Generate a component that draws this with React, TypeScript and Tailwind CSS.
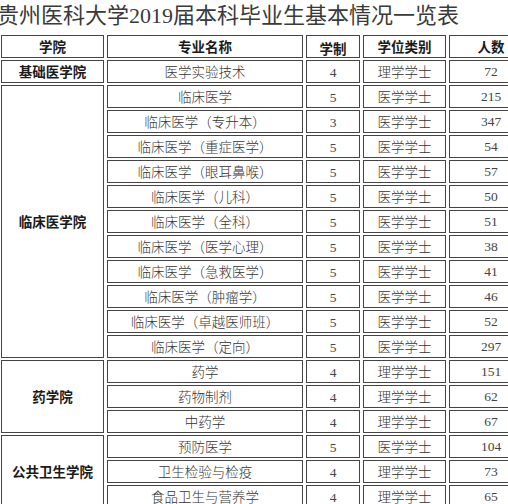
import { Fragment } from 'react'

type Row = { major: string; years: string; degree: string; count: string }
type Group = { college: string; rows: Row[] }

const groups: Group[] = [
  { college: '基础医学院', rows: [{ major: '医学实验技术', years: '4', degree: '理学学士', count: '72' }] },
  {
    college: '临床医学院',
    rows: [
      { major: '临床医学', years: '5', degree: '医学学士', count: '215' },
      { major: '临床医学（专升本）', years: '3', degree: '医学学士', count: '347' },
      { major: '临床医学（重症医学）', years: '5', degree: '医学学士', count: '54' },
      { major: '临床医学（眼耳鼻喉）', years: '5', degree: '医学学士', count: '57' },
      { major: '临床医学（儿科）', years: '5', degree: '医学学士', count: '50' },
      { major: '临床医学（全科）', years: '5', degree: '医学学士', count: '51' },
      { major: '临床医学（医学心理）', years: '5', degree: '医学学士', count: '38' },
      { major: '临床医学（急救医学）', years: '5', degree: '医学学士', count: '41' },
      { major: '临床医学（肿瘤学）', years: '5', degree: '医学学士', count: '46' },
      { major: '临床医学（卓越医师班）', years: '5', degree: '医学学士', count: '52' },
      { major: '临床医学（定向）', years: '5', degree: '医学学士', count: '297' },
    ],
  },
  {
    college: '药学院',
    rows: [
      { major: '药学', years: '4', degree: '理学学士', count: '151' },
      { major: '药物制剂', years: '4', degree: '理学学士', count: '62' },
      { major: '中药学', years: '4', degree: '理学学士', count: '67' },
    ],
  },
  {
    college: '公共卫生学院',
    rows: [
      { major: '预防医学', years: '5', degree: '医学学士', count: '104' },
      { major: '卫生检验与检疫', years: '4', degree: '理学学士', count: '73' },
      { major: '食品卫生与营养学', years: '4', degree: '理学学士', count: '65' },
    ],
  },
]

// rowspan classes written out so tailwind picks them up
const spanClass: Record<number, string> = {
  1: 'row-span-1',
  3: 'row-span-3',
  11: 'row-span-11',
}

const cell = 'flex items-center justify-center border border-[#444] bg-white'
const cjk = "font-['Noto_Sans_CJK_SC',sans-serif]"
const num = "font-['Liberation_Serif','Noto_Sans_CJK_SC',serif]"
const head = `${cell} ${cjk} font-bold text-[#1a1a1a]`

export default function App() {
  return (
    <div className="w-[508px] h-[504px] overflow-hidden bg-white text-[#333]">
      <div className="h-[33px] -ml-[3px] leading-[32px] text-[22px] whitespace-nowrap text-[#3a3a3a] font-['Liberation_Serif','Noto_Sans_CJK_SC',serif]">
        贵州医科大学2019届本科毕业生基本情况一览表
      </div>

      <div className="pl-px pt-[2px] w-[560px]">
        <div className="grid grid-cols-[103px_196px_54px_83px_84px] auto-rows-[23px] gap-x-[3px] gap-y-[2px] text-[13.5px]">
          {/* Header */}
          <div className={head}>学院</div>
          <div className={head}>专业名称</div>
          <div className={`${head} pt-[3px]`}>学制</div>
          <div className={head}>学位类别</div>
          <div className={head}>人数</div>

          {groups.map((g) => (
            <Fragment key={g.college}>
              <div className={`${head} ${spanClass[g.rows.length]}`}>{g.college}</div>
              {g.rows.map((r) => (
                <Fragment key={r.major}>
                  <div className={`${cell} ${cjk} font-light`}>{r.major}</div>
                  <div className={`${cell} ${num} pt-[3px] text-[#444]`}>{r.years}</div>
                  <div className={`${cell} ${cjk} font-light`}>{r.degree}</div>
                  <div className={`${cell} ${num} pt-px text-[#444]`}>{r.count}</div>
                </Fragment>
              ))}
            </Fragment>
          ))}
        </div>
      </div>
    </div>
  )
}
